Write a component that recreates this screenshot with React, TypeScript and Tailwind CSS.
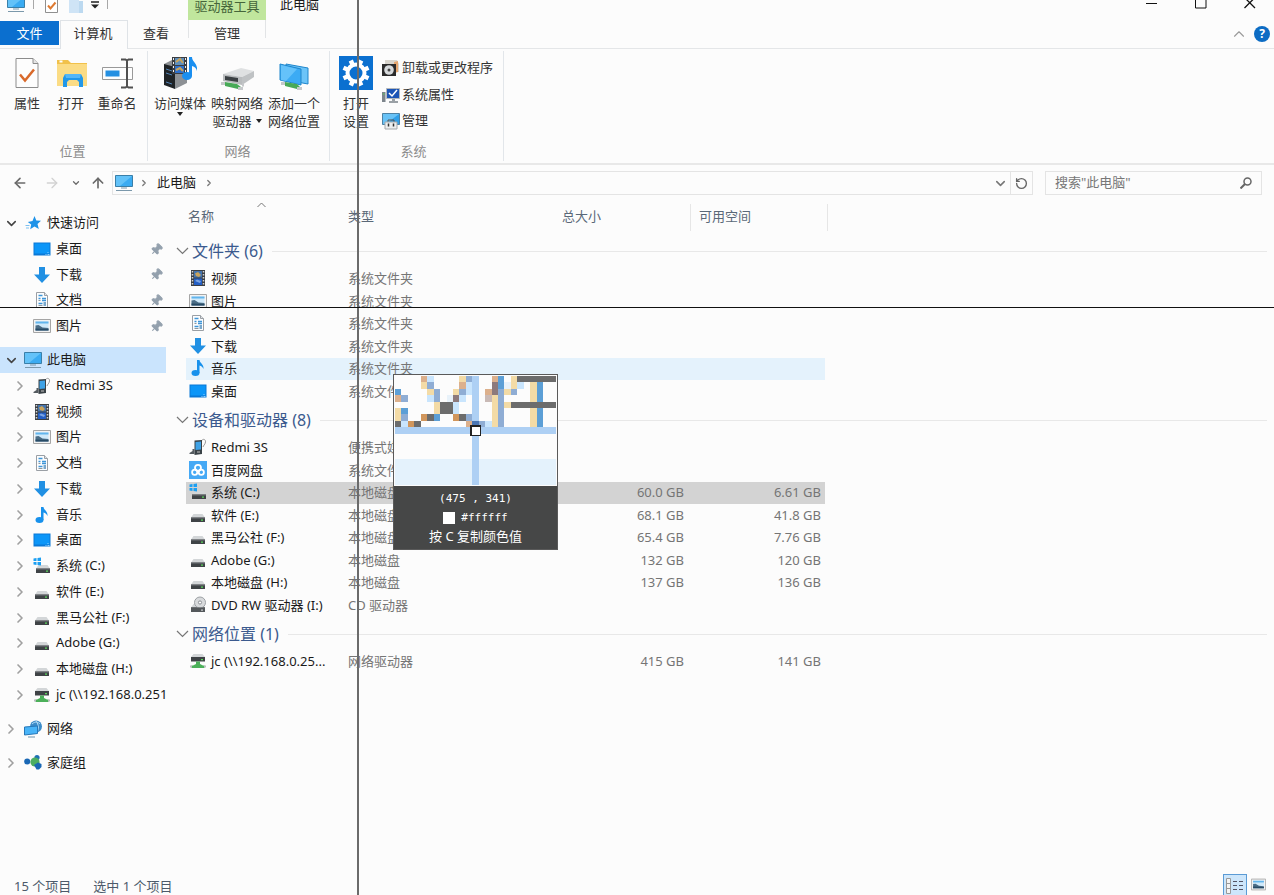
import React from 'react';
import { ArrowLeft, ArrowRight, ArrowUp, ChevronDown, ChevronRight, ChevronUp, Pin, RotateCw } from 'lucide-react';

type IconName =
  | 'star' | 'desktop' | 'download' | 'doc' | 'picture' | 'pc' | 'phone' | 'video' | 'music'
  | 'sysdrive' | 'drive' | 'netdrive' | 'dvd' | 'cloud' | 'network' | 'homegroup';

// Small 18px item icons
function ItemIcon({ name }: { name: IconName }) {
  return (
    <svg viewBox="0 0 18 18" className="w-[18px] h-[18px] shrink-0" aria-hidden="true">
      {shapes[name]}
    </svg>
  );
}

const driveBody = (
  <>
    <path d="M4.500 8h9l2.500 3.500h-14z" fill="#d3d6d8" />
    <path d="M2 11.500h14v4.500h-14z" fill="#3f4346" />
    <path d="M2 11.500h14v1h-14z" fill="#6e7376" />
    <path d="M12 13.500h2v1.200h-2z" fill="#5bd65b" />
  </>
);

const shapes: Record<IconName, React.ReactNode> = {
  star: (
    <>
      <path d="M10.500 2l1.800 4.500 4.700.3-3.500 3.200 1.300 5-4.300-2.600-4.300 2.900 1-4.800-3.400-2.600 4.700-.9z" fill="#1f93e8" />
      <path d="M1.500 11.500h4M2 14h3" stroke="#7cc0f0" />
    </>
  ),
  desktop: (
    <>
      <path d="M.5 2.500h17v13h-17z" fill="#0a78d6" />
      <path d="M1.500 3.500h15v10h-15z" fill="#0c96f8" />
      <path d="M12.500 14.500h1M14.500 14.500h2M14.500 12.500h1" stroke="#8fd0ff" />
    </>
  ),
  download: <path d="M6 1h6v7.500h5l-8 8.500-8-8.500h5z" fill="#2190e3" />,
  doc: (
    <>
      <path d="M3.500 1.500h8l3 3v12h-11z" fill="#fcfdfe" stroke="#9a9fa5" />
      <path d="M11.500 1.500v3h3" fill="#dfe3e6" stroke="#9a9fa5" />
      <path d="M5.500 4.500h4M5.500 7.500h2M9 7.500h4M9 9.500h4M5.500 12.500h4" stroke="#3d95d8" strokeWidth="1.500" />
      <path d="M10.500 11h2.500v4h-2.500z" fill="#7aa8cc" />
      <path d="M5.500 9.500h2M5.500 14.500h4" stroke="#8d979f" />
    </>
  ),
  picture: (
    <>
      <path d="M.5 2.500h17v13h-17z" fill="#f3f3f3" stroke="#a5a5a5" />
      <path d="M2.500 4.500h13v9h-13z" fill="#cfe9fa" />
      <path d="M2.500 4.500h13v2h-13z" fill="#62b5ec" />
      <path d="M2.500 8.500l3-.5 4 2.500 6 .5v2.500h-13z" fill="#4b6d86" />
      <path d="M2.500 11.500l13 .5v1.500h-13z" fill="#284b66" />
    </>
  ),
  pc: (
    <>
      <path d="M.5 1.500h17v11h-17z" fill="#3aabf2" stroke="#3a7fa8" />
      <path d="M1 2h16l-12 10h-4z" fill="#63c2f8" />
      <path d="M6 14h6M1 16.500h16" stroke="#7b98ab" />
    </>
  ),
  phone: (
    <>
      <path d="M12 4c1-4 5-3 4.500 0s-2 3-2.500 5" fill="none" stroke="#999" />
      <path d="M5.500 2.500l7.500-.5v14l-7.500 1z" fill="#3a4247" />
      <path d="M6.500 4l5.500-.5v8l-5.500.5z" fill="#3fa2e6" />
      <path d="M.5 15l3-2v-2h2v5h-5z" fill="#555b60" />
      <path d="M8 14h3" stroke="#c5c5c5" />
    </>
  ),
  video: (
    <>
      <path d="M2 1h14v16h-14z" fill="#3b3f44" />
      <path d="M5 2h8v6.500h-8z" fill="#4574ad" />
      <path d="M5 9.500h8v6.500h-8z" fill="#235ec4" />
      <path d="M6 4.500l3-1.500 3 3-2 2-3-1z" fill="#c9a35b" />
      <path d="M6 12l2-1.500 4 1.500-1 2z" fill="#7ba4e2" />
      <path d="M3.500 2v15M14.500 2v15" stroke="#d5d5d5" strokeWidth="1.500" strokeDasharray="1.500 1.500" />
    </>
  ),
  music: (
    <>
      <path d="M8 1h2.500c.5 3.500 4.500 4 4 9-.8-2-2-3-4-3.500v7.500h-2.500z" fill="#1791ec" />
      <ellipse cx="6.500" cy="14" rx="4" ry="3" fill="#1791ec" />
    </>
  ),
  sysdrive: (
    <>
      <g transform="translate(1 0)">{driveBody}</g>
      <path d="M.5 1.500l3-.5v3h-3zM4.500 1l3.500-.5v3.500h-3.500zM.5 5h3v3l-3-.5zM4.500 5h3.500v3.500l-3.500-.5z" fill="#1b9ff2" />
    </>
  ),
  drive: driveBody,
  netdrive: (
    <>
      <path d="M4.500 2h9l2.500 3h-14z" fill="#d3d6d8" />
      <path d="M2 5h14v4.500h-14z" fill="#3f4346" />
      <path d="M12 7h2v1.200h-2z" fill="#5bd65b" />
      <path d="M7 9.500h4v2.500l3 1.500h1.500v2.500h-13v-2.500h1.500l3-1.500z" fill="#4cb05a" />
      <path d="M1 14.500h2M15 14.500h2" stroke="#b9bcbe" strokeWidth="2" />
    </>
  ),
  dvd: (
    <>
      {driveBody}
      <circle cx="11" cy="6.500" r="5.500" fill="#d8dadc" stroke="#9da1a5" />
      <circle cx="11" cy="6.500" r="1.600" fill="#fff" stroke="#8b8f93" />
      <path d="M2 11.500h14v4.500h-14z" fill="#54585b" />
      <path d="M12 13.500h2v1.200h-2z" fill="#c5c8ca" />
    </>
  ),
  cloud: (
    <>
      <path d="M0 0h18v18h-18z" fill="#46a9f5" />
      <circle cx="9" cy="6.800" r="3" fill="none" stroke="#fff" strokeWidth="1.800" />
      <circle cx="5.700" cy="11.200" r="2.600" fill="none" stroke="#fff" strokeWidth="1.800" />
      <circle cx="12.300" cy="11.200" r="2.600" fill="none" stroke="#fff" strokeWidth="1.800" />
    </>
  ),
  network: (
    <>
      <circle cx="12" cy="6.500" r="6" fill="#3d8cc9" />
      <path d="M8 4c3-3 6-2 8 0M12 1c3 4 3 8 1 11" fill="none" stroke="#b2dcf5" />
      <path d="M.5 7l13-1v7.500l-13 1.500z" fill="#48b4f8" stroke="#2677b8" />
      <path d="M4 17h7" stroke="#6c93ad" />
    </>
  ),
  homegroup: (
    <>
      <circle cx="3.200" cy="7.500" r="3" fill="#1a68b5" />
      <circle cx="13" cy="3.500" r="2.600" fill="#1f70b4" />
      <circle cx="11" cy="8" r="4.600" fill="#4cae62" />
      <path d="M10 11l4-2.500 3.500 1.500v3l-2.500 2.500h-2.500z" fill="#1a68b5" />
    </>
  ),
};

const quickAccess: { name: string; icon: IconName }[] = [
  { name: '桌面', icon: 'desktop' },
  { name: '下载', icon: 'download' },
  { name: '文档', icon: 'doc' },
  { name: '图片', icon: 'picture' },
];

const thisPc: { name: string; icon: IconName }[] = [
  { name: 'Redmi 3S', icon: 'phone' },
  { name: '视频', icon: 'video' },
  { name: '图片', icon: 'picture' },
  { name: '文档', icon: 'doc' },
  { name: '下载', icon: 'download' },
  { name: '音乐', icon: 'music' },
  { name: '桌面', icon: 'desktop' },
  { name: '系统 (C:)', icon: 'sysdrive' },
  { name: '软件 (E:)', icon: 'drive' },
  { name: '黑马公社 (F:)', icon: 'drive' },
  { name: 'Adobe (G:)', icon: 'drive' },
  { name: '本地磁盘 (H:)', icon: 'drive' },
  { name: 'jc (\\\\192.168.0.251)', icon: 'netdrive' },
];

interface Entry {
  name: string;
  icon: IconName;
  type: string;
  total?: string;
  free?: string;
  state?: 'hover' | 'selected';
}

const groups: { title: string; entries: Entry[] }[] = [
  {
    title: '文件夹 (6)',
    entries: [
      { name: '视频', icon: 'video', type: '系统文件夹' },
      { name: '图片', icon: 'picture', type: '系统文件夹' },
      { name: '文档', icon: 'doc', type: '系统文件夹' },
      { name: '下载', icon: 'download', type: '系统文件夹' },
      { name: '音乐', icon: 'music', type: '系统文件夹', state: 'hover' },
      { name: '桌面', icon: 'desktop', type: '系统文件夹' },
    ],
  },
  {
    title: '设备和驱动器 (8)',
    entries: [
      { name: 'Redmi 3S', icon: 'phone', type: '便携式媒体播放器' },
      { name: '百度网盘', icon: 'cloud', type: '系统文件夹' },
      { name: '系统 (C:)', icon: 'sysdrive', type: '本地磁盘', total: '60.0 GB', free: '6.61 GB', state: 'selected' },
      { name: '软件 (E:)', icon: 'drive', type: '本地磁盘', total: '68.1 GB', free: '41.8 GB' },
      { name: '黑马公社 (F:)', icon: 'drive', type: '本地磁盘', total: '65.4 GB', free: '7.76 GB' },
      { name: 'Adobe (G:)', icon: 'drive', type: '本地磁盘', total: '132 GB', free: '120 GB' },
      { name: '本地磁盘 (H:)', icon: 'drive', type: '本地磁盘', total: '137 GB', free: '136 GB' },
      { name: 'DVD RW 驱动器 (I:)', icon: 'dvd', type: 'CD 驱动器' },
    ],
  },
  {
    title: '网络位置 (1)',
    entries: [
      { name: 'jc (\\\\192.168.0.25...', icon: 'netdrive', type: '网络驱动器', total: '415 GB', free: '141 GB' },
    ],
  },
];

function TitleBar() {
  return (
    <header className="h-5 flex items-end overflow-hidden shrink-0">
      <div className="w-[188px] flex items-end pb-[7px] pl-[7px]">
        <ItemIcon name="pc" />
        <span className="w-px h-5 mb-1 ml-2 bg-[#a8a8a8]" />
        <button aria-label="属性" className="ml-[11px]">
          <svg viewBox="0 0 13 18" className="w-[13px] h-[18px]">
            <path d="M.5.5h12v17h-12z" fill="#fff" stroke="#8f8f8f" />
            <path d="M3 10.500l2.500 3 5-6" fill="none" stroke="#de7a31" strokeWidth="2" />
          </svg>
        </button>
        <button aria-label="新建文件夹" className="ml-[11px]">
          <svg viewBox="0 0 14 18" className="w-[14px] h-[18px]">
            <path d="M0 0h10v6h4v12h-14z" fill="#cfe4f6" />
            <path d="M10 6h4v12h-4z" fill="#bcd9f0" />
          </svg>
        </button>
        <button aria-label="自定义快速访问工具栏" className="ml-2 mb-1">
          <svg viewBox="0 0 8 8" className="w-2 h-2">
            <path d="M0 1h8" stroke="#222" strokeWidth="1.500" />
            <path d="M0 3.500h8l-4 4z" fill="#222" />
          </svg>
        </button>
        <span className="w-px h-5 mb-1 ml-2 bg-[#a8a8a8]" />
      </div>
      <div className="w-[78px] h-5 flex items-end justify-center bg-[#c0e69d] text-[#45653a]">
        <span className="leading-6 pb-[2px] whitespace-nowrap">驱动器工具</span>
      </div>
      <span className="leading-6 pb-1 ml-[14px]">此电脑</span>
      <div className="ml-auto flex items-end h-5 pb-[11px] pr-[18px] gap-[37px] text-[#111]">
        <button aria-label="最小化">
          <svg viewBox="0 0 12 12" className="w-3 h-3"><path d="M0 6.500h11" stroke="currentColor" /></svg>
        </button>
        <button aria-label="最大化">
          <svg viewBox="0 0 12 12" className="w-3 h-3"><path d="M.5.5h10.500v10.500h-10.500z" fill="none" stroke="currentColor" /></svg>
        </button>
        <button aria-label="关闭">
          <svg viewBox="0 0 12 12" className="w-3 h-3"><path d="M.5.5l10.500 10.500M11 .5l-10.500 10.500" stroke="currentColor" strokeWidth="1.300" /></svg>
        </button>
      </div>
    </header>
  );
}

function RibbonTabs() {
  return (
    <div className="h-[29px] flex items-stretch shrink-0">
      <div className="w-[60px] border-b border-[#e4e6e8]">
        <button className="w-[59px] h-6 mt-px bg-[#0b6fcf] text-white leading-6">文件</button>
      </div>
      <button className="w-[68px] border-x border-t border-[#dfe3e7] pb-[2px] pr-[2px] text-[#333]">计算机</button>
      <div className="flex-1 flex border-b border-[#e4e6e8]">
        <button className="w-[60px] pb-px pr-1 text-[#333]">查看</button>
        <button className="w-[78px] h-[18px] flex items-start justify-center border-x border-[#e2e4e6] text-[#333] leading-[26px]">管理</button>
        <div className="ml-auto flex items-center gap-[6px] pr-1">
          <button aria-label="最小化功能区"><ChevronUp size={18} strokeWidth={1.5} color="#9a9a9a" /></button>
          <button aria-label="帮助" className="w-4 h-4 rounded-full bg-[#0d6cc4] text-white text-xs leading-4 font-bold">?</button>
        </div>
      </div>
    </div>
  );
}

function BigButton({ label, width, children }: { label: React.ReactNode; width: string; children: React.ReactNode }) {
  return (
    <button className={`${width} flex flex-col items-center justify-start pt-[5px] leading-[18px] whitespace-nowrap`}>
      {children}
      <span className="mt-1 flex flex-col items-center">{label}</span>
    </button>
  );
}

function RibbonGroup({ title, width, children }: { title: string; width: string; children: React.ReactNode }) {
  return (
    <section className={`${width} h-[110px] mt-[2px] flex flex-col justify-between border-r border-[#e2e6ea]`}>
      <div className="flex items-start">{children}</div>
      <h2 className="text-center leading-[20px] pr-[6px] text-[#8c8c8c]">{title}</h2>
    </section>
  );
}

const bigIcon = 'w-[34px] h-[34px]';

function Ribbon() {
  return (
    <div className="h-[116px] flex border-b-2 border-[#e8e8e8] shrink-0 text-[#333]">
      <RibbonGroup title="位置" width="w-[148px] pl-1">
        <BigButton label="属性" width="w-[46px]">
          <svg viewBox="0 0 34 34" className={bigIcon}>
            <path d="M6 2.500h17l5 5v24h-22z" fill="#fdfdfd" stroke="#8c8c8c" />
            <path d="M23 2.500v5h5" fill="#e6e6e6" stroke="#8c8c8c" />
            <path d="M10 18.500l5 6 9-11" fill="none" stroke="#d9692a" strokeWidth="2.500" />
          </svg>
        </BigButton>
        <BigButton label="打开" width="w-[42px]">
          <svg viewBox="0 0 34 34" className={bigIcon}>
            <path d="M3 4h11l3 3h16v4h-30z" fill="#f1c14b" />
            <path d="M3 8h30v22h-30z" fill="#fbdc85" />
            <path d="M5.500 5.500h3" stroke="#fff" strokeWidth="2" />
            <path d="M9 31v-9l2-4h16l2 4v9h-4v-5l-2-2h-8l-2 2v5z" fill="#2298ea" />
            <path d="M11 18h16l-1 4h-14z" fill="#55b7f8" />
          </svg>
        </BigButton>
        <BigButton label="重命名" width="w-[50px]">
          <svg viewBox="0 0 34 34" className={bigIcon}>
            <path d="M2.500 11.500h30v12h-30z" fill="#fdfdfd" stroke="#999" />
            <path d="M5.500 14.500h14v6h-14z" fill="#2590e2" />
            <path d="M21 3.500h4.500l1.500 1 1.500-1h4.500M27 4v27M21 31.500h4.500l1.500-1 1.500 1h4.500" fill="none" stroke="#505050" strokeWidth="2" />
          </svg>
        </BigButton>
      </RibbonGroup>

      <RibbonGroup title="网络" width="w-[182px] pl-1">
        <BigButton
          width="w-[56px]"
          label={<>访问媒体<svg viewBox="0 0 6 4" className="w-[6px] h-1"><path d="M0 0h6l-3 4z" fill="#222" /></svg></>}
        >
          <svg viewBox="0 0 34 34" className={bigIcon}>
            <path d="M1 8l8-4 15 4v19l-12 6z" fill="#8d9195" />
            <path d="M1 8l11 3v22l-11-4z" fill="#1f2326" />
            <path d="M3 13l6 2M3 17l6 2M3 26l6 2" stroke="#5284b8" />
            <path d="M9 1h15v17h-15z" fill="#3b3e42" />
            <path d="M12 2h9v7h-9z" fill="#5e8fbd" />
            <path d="M12 10h9v7h-9z" fill="#2e6fca" />
            <path d="M13 6l4-3 3 4M13 14l4-2 3 3" stroke="#c9a45c" fill="none" strokeWidth="2" />
            <path d="M10.500 2v16M22.500 2v16" stroke="#eee" strokeDasharray="2 2" />
            <path d="M26 1h3c0 5 6 6 5 14-1-3-2-4-5-5v10h-3z" fill="#1a8ff0" />
            <ellipse cx="24" cy="20" rx="5" ry="4" fill="#1a8ff0" />
          </svg>
        </BigButton>
        <BigButton
          width="w-[58px]"
          label={
            <>
              <span>映射网络</span>
              <span className="flex items-center gap-1">驱动器<svg viewBox="0 0 6 4" className="w-[6px] h-1"><path d="M0 0h6l-3 4z" fill="#222" /></svg></span>
            </>
          }
        >
          <svg viewBox="0 0 34 34" className={bigIcon}>
            <path d="M3 18l18-6 13 3-12 6z" fill="#dfe1e2" />
            <path d="M3 18l19 3v8l-19-4z" fill="#b9bcbe" />
            <path d="M5 20l13 2v4l-13-2z" fill="#3b4043" />
            <path d="M22 21l12-6v6l-12 8z" fill="#bfc2c4" />
            <path d="M5 26l12 2 4 3-3 2-13-3z" fill="#47a957" />
            <path d="M1 27.500h4M18 32.500h5M22 29h2" stroke="#c5c8ca" strokeWidth="3" />
          </svg>
        </BigButton>
        <BigButton width="w-[56px]" label={<><span>添加一个</span><span>网络位置</span></>}>
          <svg viewBox="0 0 34 34" className={bigIcon}>
            <path d="M9 8l22 4v16l-22-4z" fill="#6cc4f8" stroke="#1f86cc" />
            <path d="M3 8l21 5v16l-21-5z" fill="#3cabf4" stroke="#1f86cc" />
            <path d="M4 9l16 4-11 12-5-1z" fill="#65c2fa" />
            <path d="M8 26l12 2 3 3-3 2-12-3z" fill="#47a957" />
            <path d="M4 27.500h4M20 32.500h5" stroke="#c5c8ca" strokeWidth="3" />
          </svg>
        </BigButton>
      </RibbonGroup>

      <RibbonGroup title="系统" width="w-[174px]">
        <BigButton width="w-[52px]" label={<><span>打开</span><span>设置</span></>}>
          <svg viewBox="0 0 34 34" className={bigIcon}>
            <path d="M0 0h34v34h-34z" fill="#0b70d0" />
            <g stroke="#fff" fill="none">
              <circle cx="17" cy="17" r="8.500" strokeWidth="4" />
              <path
                d="M20 9.600L22.200 4.500M14 9.600L11.800 4.500M24.400 14L29.500 11.800M24.400 20L29.500 22.200M20 24.400L22.200 29.500M14 24.400L11.800 29.500M9.600 14L4.500 11.800M9.600 20L4.500 22.200"
                strokeWidth="4.500"
              />
            </g>
          </svg>
        </BigButton>
        <ul className="pt-[3px]">
          <li>
            <button className="h-[27px] flex items-center gap-[2px]">
              <svg viewBox="0 0 18 18" className="w-[18px] h-[18px]">
                <path d="M3 1h12l2 4v8h-14z" fill="#d9d5cd" />
                <path d="M12 3l4-1v11l-4 1z" fill="#e5a66f" />
                <path d="M0 5h14v12h-14z" fill="#2b2b2b" />
                <circle cx="7" cy="11" r="4.800" fill="#d7dadc" />
                <circle cx="7" cy="11" r="1.500" fill="#444" />
              </svg>
              卸载或更改程序
            </button>
          </li>
          <li>
            <button className="h-[27px] flex items-center gap-[2px]">
              <svg viewBox="0 0 18 18" className="w-[18px] h-[18px]">
                <path d="M4.500 2.500h13v10h-13z" fill="#1d55b5" stroke="#b3b8bd" />
                <path d="M7 7l3 3 5-6" fill="none" stroke="#fff" strokeWidth="1.500" />
                <path d="M10 13h3v2h3v2h-9v-2h3z" fill="#9ba1a6" />
                <path d="M0 6h3.500v10h-3.500z" fill="#7d858c" />
                <path d="M1 8h1.500" stroke="#58d558" />
              </svg>
              系统属性
            </button>
          </li>
          <li>
            <button className="h-[26px] flex items-center gap-[2px]">
              <svg viewBox="0 0 18 18" className="w-[18px] h-[18px]">
                <path d="M.5 1.500h17v11h-17z" fill="#2f9fe8" stroke="#4d82a5" />
                <path d="M1 2h16l-13 10h-3z" fill="#68c2f6" />
                <path d="M6 10v-2h6v2" fill="none" stroke="#555" />
                <path d="M3 10h12v7h-12z" fill="#eceeef" stroke="#a4a8ab" />
                <path d="M6.500 11.500v3M11.500 11.500v3" stroke="#333" strokeWidth="1.500" />
              </svg>
              管理
            </button>
          </li>
        </ul>
      </RibbonGroup>
    </div>
  );
}

function AddressBar() {
  return (
    <div className="h-[31px] pt-[6px] pb-px pr-3 flex items-stretch shrink-0">
      <div className="w-28 flex items-center pl-3 text-[#6a6a6a]">
        <button aria-label="后退"><ArrowLeft size={16} strokeWidth={2.5} /></button>
        <button aria-label="前进" className="ml-4" disabled><ArrowRight size={16} color="#d2d2d2" /></button>
        <button aria-label="最近浏览的位置" className="ml-[11px]"><ChevronDown size={10} strokeWidth={3} /></button>
        <button aria-label="上移" className="ml-[9px]"><ArrowUp size={16} strokeWidth={2.5} /></button>
      </div>
      <div className="flex-1 flex items-center border border-[#e4e4e4] pl-[2px]">
        <ItemIcon name="pc" />
        <ChevronRight size={10} strokeWidth={3} color="#777" className="ml-[6px]" />
        <a href="#this-pc" className="ml-2">此电脑</a>
        <ChevronRight size={10} strokeWidth={3} color="#777" className="ml-2" />
        <button aria-label="以前的位置" className="ml-auto mr-[2px]"><ChevronDown size={15} strokeWidth={2.5} color="#777" /></button>
        <button aria-label="刷新" className="w-[22px] self-stretch flex items-center justify-center border-l border-[#e4e4e4]">
          <RotateCw size={13} strokeWidth={2.5} color="#666" className="-scale-x-100" />
        </button>
      </div>
      <label className="w-[217px] ml-3 flex items-center border border-[#e4e4e4] px-[9px]">
        <input
          type="text"
          aria-label="搜索"
          placeholder={'搜索"此电脑"'}
          className="flex-1 min-w-0 outline-none bg-transparent placeholder:text-[#777]"
        />
        <svg viewBox="0 0 12 12" className="w-3 h-3" aria-hidden="true">
          <circle cx="7.500" cy="4.500" r="3.500" fill="none" stroke="#666" strokeWidth="1.500" />
          <path d="M5 7l-4.500 4.500" stroke="#666" strokeWidth="2" />
        </svg>
      </label>
    </div>
  );
}

interface TreeRowProps {
  name: string;
  icon: IconName;
  open?: boolean;
  child?: boolean;
  pinned?: boolean;
  active?: boolean;
}

function TreeRow({ name, icon, open, child, pinned, active }: TreeRowProps) {
  return (
    <a
      href={`#${name}`}
      className={`h-full flex items-center overflow-hidden whitespace-nowrap ${child ? 'pl-[9px]' : ''} ${active ? 'bg-[#cae4fd]' : ''}`}
    >
      <span className="w-[22px] mr-[2px] shrink-0 flex justify-center">
        {!pinned && (open
          ? <ChevronDown size={15} strokeWidth={2.5} color="#444" />
          : <ChevronRight size={16} strokeWidth={2.5} color="#a0a0a0" />)}
      </span>
      <ItemIcon name={icon} />
      <span className="ml-[5px]">{name}</span>
      {pinned && <Pin size={13} fill="#93a0ad" color="#93a0ad" className="ml-auto mr-[3px] rotate-45" />}
    </a>
  );
}

const treeItem = 'h-[26px] [&:nth-child(4n+2)]:h-[25px]';

function Sidebar() {
  return (
    <nav className="w-[166px] shrink-0 pt-[14px] flex flex-col gap-2">
      <div>
        <div className="h-[26px]"><TreeRow name="快速访问" icon="star" open /></div>
        <ul>
          {quickAccess.map((item) => (
            <li key={item.name} className={treeItem}><TreeRow {...item} child pinned /></li>
          ))}
        </ul>
      </div>
      <div>
        <div className="h-[26px]"><TreeRow name="此电脑" icon="pc" open active /></div>
        <ul>
          {thisPc.map((item) => (
            <li key={item.name} className={treeItem}><TreeRow {...item} child /></li>
          ))}
        </ul>
      </div>
      <div className="h-[26px]"><TreeRow name="网络" icon="network" /></div>
      <div className="h-[26px]"><TreeRow name="家庭组" icon="homegroup" /></div>
    </nav>
  );
}

function FileTable() {
  const stateBg = { hover: 'bg-[#e4f2fc]', selected: 'bg-[#d3d3d3]' };
  return (
    <main className="flex-1 min-w-0 pl-[10px] pr-[7px]">
      <table className="w-full table-fixed border-collapse text-left">
        <colgroup>
          <col className="w-[10px]" />
          <col className="w-[154px]" />
          <col className="w-[214px]" />
          <col className="w-[137px]" />
          <col className="w-[134px]" />
          <col className="w-[3px]" />
          <col />
        </colgroup>
        <thead>
          <tr className="h-[35px] align-bottom text-[#5a6878]">
            <th className="p-0" />
            <th className="p-0 font-normal">
              <div className="h-[31px] pl-[2px] flex flex-col">
                <svg viewBox="0 0 9 9" className="w-[9px] h-[9px] shrink-0 ml-[69px]" aria-hidden="true">
                  <path d="M.5 7l4-4 4 4" fill="none" stroke="#777" />
                </svg>
                <span className="leading-[14px]">名称</span>
              </div>
            </th>
            <th className="p-0 font-normal"><div className="h-[27px] pl-2 leading-6">类型</div></th>
            <th className="p-0 font-normal"><div className="h-[27px] pl-2 leading-6 border-r border-[#e6e6e6]">总大小</div></th>
            <th className="p-0 font-normal" colSpan={2}><div className="h-[27px] pl-2 leading-6 border-r border-[#e6e6e6]">可用空间</div></th>
            <th className="p-0" />
          </tr>
        </thead>
        {groups.map((group, i) => (
          <tbody key={group.title}>
            <tr className={i === 0 ? 'h-[37px]' : 'h-[34px]'}>
              <th colSpan={7} className="p-0 font-normal">
                <div className={`flex items-center text-base leading-6 text-[#3b5a8e] ${i === 0 ? 'pt-[3px]' : ''}`}>
                  <svg viewBox="0 0 13 8" className="w-[13px] h-2" aria-hidden="true">
                    <path d="M1 1l5.500 5.500 5.500-5.500" fill="none" stroke="#777" strokeWidth="1.200" />
                  </svg>
                  <span className="ml-[3px]">{group.title}</span>
                  <span className="flex-1 h-px ml-[9px] bg-[#e8e8e8]" />
                </div>
              </th>
            </tr>
            {group.entries.map((e) => {
              const bg = e.state ? stateBg[e.state] : '';
              return (
                <tr key={e.name} className="h-[22px] odd:h-[23px] text-[#757575] whitespace-nowrap leading-5">
                  <td className="p-0" />
                  <td className={`p-0 pb-[2px] ${bg}`}>
                    <div className="pl-[3px] flex items-center gap-1 text-[#1a1a1a]">
                      <ItemIcon name={e.icon} />
                      {e.name}
                    </div>
                  </td>
                  <td className={`p-0 pb-[2px] pl-2 ${bg}`}>{e.type}</td>
                  <td className={`p-0 pb-[2px] pr-[7px] text-right ${bg}`}>{e.total}</td>
                  <td className={`p-0 pb-[2px] pr-1 text-right ${bg}`}>{e.free}</td>
                  <td className="p-0" />
                  <td className="p-0" />
                </tr>
              );
            })}
          </tbody>
        ))}
      </table>
    </main>
  );
}

function StatusBar() {
  return (
    <footer className="h-[22px] shrink-0 overflow-hidden flex items-start pl-[14px] pr-2 text-[#4c5a6a] leading-[26px]">
      <span>15 个项目</span>
      <span className="ml-[22px]">选中 1 个项目</span>
      <div className="ml-auto pt-px flex items-start gap-1">
        <button aria-label="详细信息" className="w-6 h-6 border border-[#5b9bd5] bg-[#cde6fb] flex items-center justify-center">
          <svg viewBox="0 0 18 16" className="w-[18px] h-4">
            <path d="M.5.5h4v15h-4z" fill="#f4f4f4" stroke="#999" />
            <path d="M1 5.500h3M1 10.500h3" stroke="#999" />
            <path d="M7 3.500h4M13 3.500h4M7 7.500h4M13 7.500h4M7 11.500h4M13 11.500h4" stroke="#556" />
          </svg>
        </button>
        <button aria-label="大图标" className="mt-[3px]">
          <svg viewBox="0 0 18 18" className="w-[15px] h-[15px]">{shapes.picture}</svg>
        </button>
      </div>
    </footer>
  );
}

// Magnified screen pixels: one letter per cell, '.' is white
const pixelRows = [
  '....SL....TP...SB.TGGGGGG',
  '....TP....SL...MBfTL.TB..',
  'B....TP..TPL..SMPTP..TB..',
  'SP...LP.fML...mTP....TB..',
  '......TGGL.....TPTGGGGGGG',
  'TB....TGGL.....TP....TB..',
  'TP..OGB..OGP...TP....TB..',
  'GLOG.......SDPLTP....TB..',
];

const pixelColors: Record<string, string> = {
  S: '#dcb08c', L: '#c9e5fd', T: '#f3dba6', P: '#8fadd4', B: '#5c9fd6', G: '#6c6c6c', f: '#e8f2fa',
  M: '#8d7a7c', m: '#c9bab6', O: '#d1965c', D: '#4a76b4',
};

function Magnifier() {
  return (
    <div className="absolute left-[393px] top-[374px] w-[165px] border border-[#5a5a5a] bg-[#fcfcfc] text-white">
      <svg viewBox="0 0 25 17" preserveAspectRatio="none" className="block w-full h-[111px] p-px" shapeRendering="crispEdges">
        <rect y="13" width="25" height="4" fill="#e4f2fc" />
        <rect x="12" width="1" height="17" fill="#aed0f4" />
        <rect y="8" width="25" height="1" fill="#aed0f4" />
        {pixelRows.map((row, y) =>
          row.split('').map((c, x) => c !== '.' && <rect key={`${x}-${y}`} x={x} y={y} width="1" height="1" fill={pixelColors[c]} />)
        )}
        <rect x="11.800" y="7.800" width="1.500" height="1.500" fill="#fff" stroke="#222" strokeWidth=".2" />
      </svg>
      <div className="h-[63px] pt-[3px] bg-[#3c3d3d]/95 text-center leading-[19px]">
        <p className="font-['DejaVu_Sans_Mono',monospace] text-[11px] leading-[19px]">(475 , 341)</p>
        <p className="font-['DejaVu_Sans_Mono',monospace] text-[11px] leading-[19px] flex items-center justify-center gap-[6px]">
          <span className="w-3 h-3 bg-white" />
          #ffffff
        </p>
        <p>按 C 复制颜色值</p>
      </div>
    </div>
  );
}

export default function App() {
  return (
    <div className="relative h-screen overflow-hidden flex flex-col bg-[#fcfcfc] text-[#1a1a1a] text-[13px] font-['Noto_Sans','Noto_Sans_CJK_SC',sans-serif]">
      <TitleBar />
      <RibbonTabs />
      <Ribbon />
      <AddressBar />
      <div className="flex-1 min-h-0 flex overflow-hidden">
        <Sidebar />
        <FileTable />
      </div>
      <StatusBar />

      {/* Colour picker crosshair */}
      <div className="absolute inset-y-0 left-[357px] w-[2px] bg-[#6b6b6b] pointer-events-none" />
      <div className="absolute inset-x-0 top-[307px] h-px bg-[#111] pointer-events-none" />
      <Magnifier />
    </div>
  );
}
